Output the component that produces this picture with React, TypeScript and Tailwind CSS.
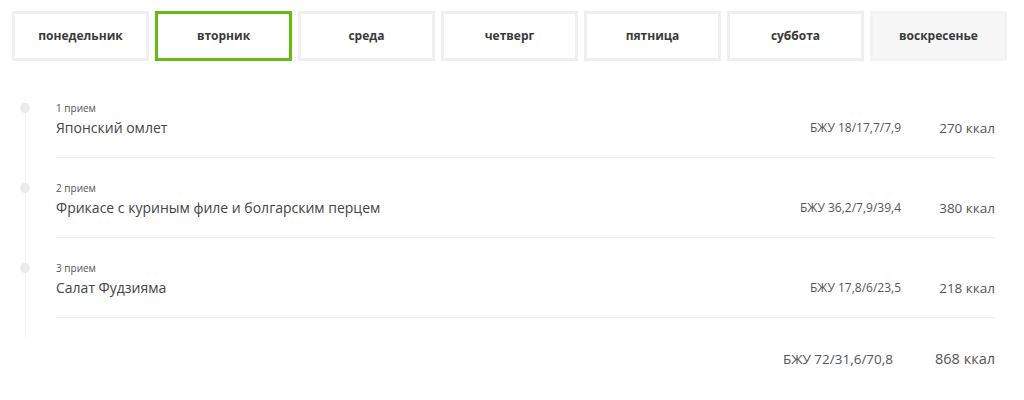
const days = [
  'понедельник',
  'вторник',
  'среда',
  'четверг',
  'пятница',
  'суббота',
  'воскресенье',
];

const meals = [
  { label: '1 прием', title: 'Японский омлет', bju: 'БЖУ 18/17,7/7,9', kcal: '270 ккал' },
  {
    label: '2 прием',
    title: 'Фрикасе с куриным филе и болгарским перцем',
    bju: 'БЖУ 36,2/7,9/39,4',
    kcal: '380 ккал',
  },
  { label: '3 прием', title: 'Салат Фудзияма', bju: 'БЖУ 17,8/6/23,5', kcal: '218 ккал' },
];

const App = () => {
  const active = 1;

  return (
    <div
      className="w-[1024px] h-[400px] bg-white text-[#444]"
      style={{ fontFamily: '"Open Sans", "Noto Sans", sans-serif' }}
    >
      <div className="flex gap-[6px] pl-3 pt-[11px]">
        {days.map((day, i) => (
          <div
            key={day}
            className={`w-[137px] h-[50px] flex items-center justify-center border-[3px] text-[12px] font-bold text-[#3a3a3a] ${
              i === active
                ? 'border-[#66bb11]'
                : i === days.length - 1
                  ? 'border-[#f2f2f2] bg-[#f7f7f7]'
                  : 'border-[#efefef]'
            }`}
          >
            {day}
          </div>
        ))}
      </div>

      <div className="relative mt-[17px] pl-14 pr-[29px]">
        <div className="absolute left-[25px] top-[22px] h-[238px] w-px bg-[#f3f3f3]" />

        {meals.map((meal) => (
          <div
            key={meal.label}
            className="relative flex items-end border-b border-[#efefef] pt-[24px] pb-[19px]"
          >
            <div className="absolute -left-[36px] top-[25px] h-[10px] w-[10px] rounded-full bg-[#ebebeb]" />
            <div className="flex-1">
              <div className="text-[10px] leading-[12px] text-[#555]">{meal.label}</div>
              <div className="mt-1 text-[14px] leading-[20px] text-[#444]">{meal.title}</div>
            </div>
            <div className="text-[12px] leading-[20px] text-[#555]">{meal.bju}</div>
            <div className="w-[94px] text-right text-[13.5px] leading-[20px] text-[#555]">
              {meal.kcal}
            </div>
          </div>
        ))}

        <div className="flex justify-end pt-[31px] leading-[20px] text-[#555]">
          <div className="text-[13.5px]">БЖУ 72/31,6/70,8</div>
          <div className="w-[102px] text-right text-[14.5px]">868 ккал</div>
        </div>
      </div>
    </div>
  );
};

export default App;
